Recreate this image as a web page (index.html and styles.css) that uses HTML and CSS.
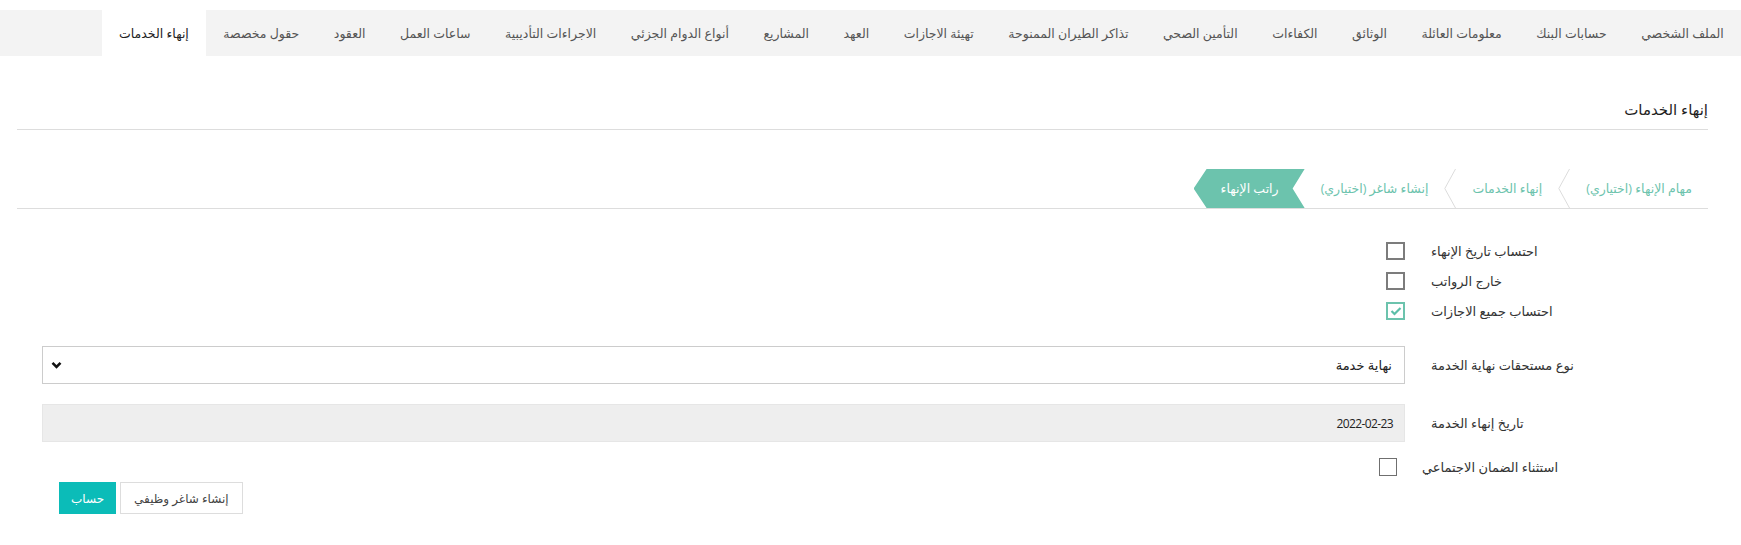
FILE: index.html
```html
<!DOCTYPE html>
<html lang="ar" dir="rtl">
<head>
<meta charset="utf-8">
<title>إنهاء الخدمات</title>
<link rel="stylesheet" href="styles.css">
</head>
<body>
<nav class="tabs">
  <a class="tab">الملف الشخصي</a>
  <a class="tab">حسابات البنك</a>
  <a class="tab">معلومات العائلة</a>
  <a class="tab">الوثائق</a>
  <a class="tab">الكفاءات</a>
  <a class="tab">التأمين الصحي</a>
  <a class="tab">تذاكر الطيران الممنوحة</a>
  <a class="tab">تهيئة الاجازات</a>
  <a class="tab">العهد</a>
  <a class="tab">المشاريع</a>
  <a class="tab">أنواع الدوام الجزئي</a>
  <a class="tab">الاجراءات التأديبية</a>
  <a class="tab">ساعات العمل</a>
  <a class="tab">العقود</a>
  <a class="tab">حقول مخصصة</a>
  <a class="tab active">إنهاء الخدمات</a>
</nav>

<main class="panel">
  <h2 class="title">إنهاء الخدمات</h2>

  <div class="steps">
    <div class="step">مهام الإنهاء (اختياري)</div>
    <svg class="sep" width="12" height="39" viewBox="0 0 12 39"><polyline points="11.5,0 0.8,19.5 11.5,39" fill="none" stroke="#dcdcdc" stroke-width="1"/></svg>
    <div class="step">إنهاء الخدمات</div>
    <svg class="sep" width="12" height="39" viewBox="0 0 12 39"><polyline points="11.5,0 0.8,19.5 11.5,39" fill="none" stroke="#dcdcdc" stroke-width="1"/></svg>
    <div class="step">إنشاء شاغر (اختياري)</div>
    <div class="step current">راتب الإنهاء</div>
  </div>

  <form class="form">
    <div class="row check-row">
      <label class="lbl">احتساب تاريخ الإنهاء</label>
      <div class="ctrl"><span class="cb"></span></div>
    </div>
    <div class="row check-row">
      <label class="lbl">خارج الرواتب</label>
      <div class="ctrl"><span class="cb"></span></div>
    </div>
    <div class="row check-row">
      <label class="lbl">احتساب جميع الاجازات</label>
      <div class="ctrl"><span class="cb checked"><svg width="12" height="10" viewBox="0 0 12 10"><polyline points="1.5,5 4.5,8 10.5,2" fill="none" stroke="#5cbfa8" stroke-width="2.2"/></svg></span></div>
    </div>

    <div class="row field-row">
      <label class="lbl">نوع مستحقات نهاية الخدمة</label>
      <div class="ctrl">
        <div class="select">
          <span class="val">نهاية خدمة</span>
          <svg class="caret" width="11" height="8" viewBox="0 0 11 8"><polyline points="1.5,1.8 5.5,5.8 9.5,1.8" fill="none" stroke="#111" stroke-width="2.6"/></svg>
        </div>
      </div>
    </div>

    <div class="row field-row">
      <label class="lbl">تاريخ إنهاء الخدمة</label>
      <div class="ctrl">
        <div class="input readonly">2022-02-23</div>
      </div>
    </div>

    <div class="row social-row">
      <label class="lbl social-lbl">استثناء الضمان الاجتماعي</label>
      <div class="ctrl"><span class="cb thin"></span></div>
    </div>

    <div class="actions">
      <button type="button" class="btn btn-default">إنشاء شاغر وظيفي</button>
      <button type="button" class="btn btn-primary">حساب</button>
    </div>
  </form>
</main>
</body>
</html>
```

FILE: styles.css
```css
* { box-sizing: border-box; }

html, body {
  margin: 0;
  padding: 0;
  background: #ffffff;
}

body {
  font-family: "Open Sans", "DejaVu Sans", sans-serif;
  font-size: 12px;
  color: #333;
  padding-top: 10px;
}

/* top tabs */
.tabs {
  display: flex;
  flex-direction: row;
  background: #f3f3f3;
  height: 46px;
  white-space: nowrap;
  overflow: hidden;
}

.tab {
  display: flex;
  align-items: center;
  padding: 0 17.25px;
  color: #555;
  font-size: 12.5px;
  text-decoration: none;
}

.tab.active {
  background: #ffffff;
  color: #222;
}

/* panel */
.panel {
  padding: 0 33px 0 17px;
}

.title {
  margin: 0;
  padding: 43px 0 10px;
  font-size: 15px;
  line-height: 20px;
  font-weight: normal;
  color: #1e1e1e;
  border-bottom: 1px solid #dddddd;
}

/* wizard steps */
.steps {
  display: flex;
  align-items: stretch;
  height: 40px;
  margin-top: 39px;
  border-bottom: 1px solid #dddddd;
}

.step {
  display: flex;
  align-items: center;
  padding: 0 16px;
  color: #6cc3ad;
  font-size: 12.5px;
  white-space: nowrap;
}

.sep {
  flex: none;
  display: block;
}

.step.current {
  background: #6cc3ad;
  color: #ffffff;
  padding: 0 26px 0 27px;
  clip-path: polygon(100% 0, 13px 0, 0 50%, 13px 100%, 100% 100%, calc(100% - 12px) 50%);
}

/* form */
.form {
  padding-left: 25px;
  margin-top: 27px;
}

.row {
  display: grid;
  grid-template-columns: 277px 1fr;
  column-gap: 26px;
  align-items: center;
}

.lbl {
  text-align: left;
  font-size: 13px;
  color: #333;
  white-space: nowrap;
}

.check-row {
  height: 30px;
}

.cb {
  display: inline-flex;
  align-items: center;
  justify-content: center;
  width: 19px;
  height: 18px;
  border: 2px solid #7c7c7c;
  background: #fff;
  vertical-align: middle;
}

.cb.checked {
  border-color: #6cc3ad;
}

.cb.thin {
  border: 1px solid #6f6f6f;
  width: 18px;
}

.ctrl {
  display: flex;
  align-items: center;
}

.field-row {
  margin-top: 20px;
}

.select,
.input {
  display: flex;
  align-items: center;
  justify-content: space-between;
  width: 100%;
  height: 38px;
  padding: 0 12px 0 8px;
  border: 1px solid #cccccc;
  background: #fff;
  font-size: 13px;
  color: #222;
}

.caret {
  display: block;
}

.input.readonly {
  background: #eeeeee;
  border-color: #e6e6e6;
  font-family: "Open Sans", "Liberation Sans", sans-serif;
  font-size: 12px;
  letter-spacing: -0.6px;
  padding-right: 11px;
}

.social-row {
  height: 24px;
  margin-top: 13px;
}

.social-lbl {
  margin-left: -9px;
}

.social-row .ctrl {
  padding-right: 8px;
}

.actions {
  display: flex;
  justify-content: flex-end;
  gap: 4px;
  margin-top: 3px;
  padding-left: 17px;
}

.btn {
  height: 32px;
  padding: 0 13px;
  font-family: "Open Sans", "DejaVu Sans", sans-serif;
  font-size: 12px;
  border-radius: 0;
  cursor: pointer;
}

.btn-primary {
  background: #0bbcb8;
  border: 1px solid #0bbcb8;
  color: #fff;
  padding: 0 11px;
}

.btn-default {
  background: #fff;
  border: 1px solid #dddddd;
  color: #444;
}
```
